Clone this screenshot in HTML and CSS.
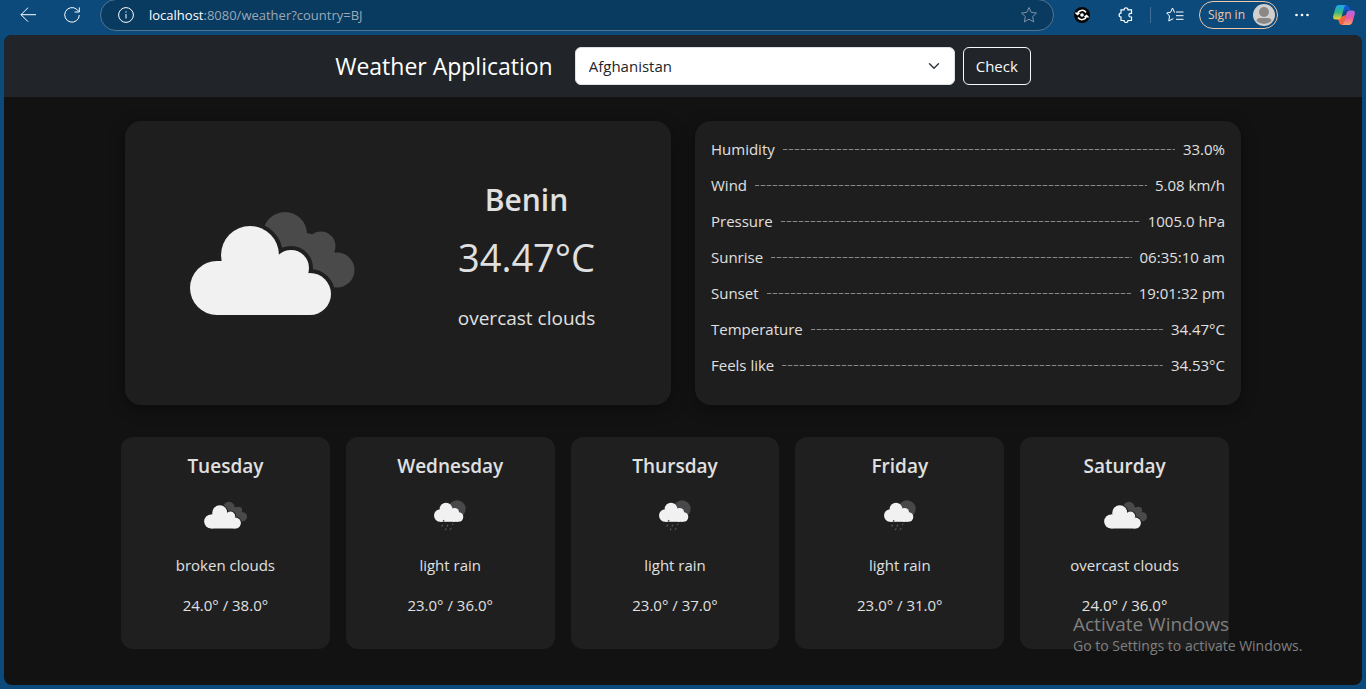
FILE: index.html
```html
<!DOCTYPE html>
<html lang="en">
<head>
<meta charset="utf-8">
<title>Weather Application</title>
<link rel="stylesheet" href="styles.css">
</head>
<body>
<svg class="defs" aria-hidden="true">
  <symbol id="clouds" viewBox="-19 -19 230 230">
    <g fill="#4a4a4b"><circle cx="111" cy="67" r="22"/><circle cx="147" cy="79" r="14.500"/><circle cx="163" cy="103" r="17.500"/><path d="M111 60L133 66 150 70 161 86 160 118 120 100Z"/></g>
    <g class="halo"><circle cx="43" cy="121" r="26"/><circle cx="76" cy="88" r="29"/><circle cx="117" cy="101" r="18"/><circle cx="136" cy="127" r="21"/></g>
    <g fill="#f1f1f1"><circle cx="43" cy="121" r="27"/><circle cx="76" cy="88" r="29"/><circle cx="117" cy="101" r="18"/><circle cx="136" cy="127" r="21"/><path d="M43 94H110L136 110V148H43Z"/></g>
  </symbol>
  <symbol id="rain" viewBox="0 0 60 60">
    <circle cx="37" cy="24" r="8.7" fill="#48484a"/>
    <g fill="#f1f1f1"><circle cx="20.3" cy="30.5" r="6.3"/><circle cx="26" cy="24" r="6.3"/><circle cx="34.5" cy="27.5" r="4.6"/><circle cx="38.5" cy="32" r="4.8"/><path d="M20 26H35V36.8H20Z"/><path d="M33 29H38V36.8H33Z"/></g>
    <path d="M24 35l-.8 1.6M22.8 39.6l-1.2 2M28 39.6l-1.2 2M33 38.6l-.8 1.4M26.2 43.4l-1 1.8M31.2 43l-1.2 2" stroke="#505052" stroke-width="1.3" fill="none"/>
  </symbol>
</svg>

<div class="toolbar">
  <button class="tool" aria-label="Back"><svg width="16" height="16" viewBox="0 0 16 16"><path d="M16 7.7H1M8 .7l-7 7 7 7"/></svg></button>
  <button class="tool refresh" aria-label="Refresh"><svg width="16" height="16" viewBox="0 0 16 16"><path d="M15.3 8A7.3 7.3 0 1 1 12.6 2.2L15 4.7M15.3.4V5H10.6"/></svg></button>
  <div class="address">
    <svg width="16" height="16" viewBox="0 0 16 16"><circle cx="8" cy="8" r="7.4"/><path d="M8 7v4.5M8 4.3v1.3"/></svg>
    <span class="url"><b>localhost</b>:8080/weather?country=BJ</span>
    <svg class="star" width="18" height="18" viewBox="0 0 18 18"><path d="M9 1.5l2.2 4.9 5.3.6-3.9 3.6 1.1 5.3L9 13.2l-4.700 2.700 1.100-5.300L1.500 7l5.300-.6z"/></svg>
  </div>
  <button class="tool" aria-label="Sync"><svg width="16" height="16" viewBox="0 0 16 16"><circle cx="8" cy="8" r="8" fill="#050505" stroke="none"/><circle cx="8" cy="8" r="1.800" fill="#fff" stroke="none"/><path stroke-width="1.500" d="M3.500 7A4.700 4.700 0 0 1 12 5.500M12.500 9A4.700 4.700 0 0 1 4 10.500M1.500 5.500l2 2 2-1.500M14.500 10.500l-2-2-2 1.500"/></svg></button>
  <button class="tool puzzle" aria-label="Extensions"><svg width="16" height="16" viewBox="0 0 16 16"><path stroke-width="1.200" d="M3 2.800H6A2 2 0 0 1 10 2.800H13.500V6.300H12.700A1.800 1.800 0 0 0 12.700 10H13.500V13.500H10A2 2 0 0 1 6 13.500H3V10A1.900 1.900 0 0 1 3 6.200Z"/></svg></button>
  <span class="divider"></span>
  <button class="tool" aria-label="Favorites"><svg width="18" height="16" viewBox="0 0 18 16"><path d="M9 5.300H8.500L6.500 1 4.600 5.300.7 5.900l2.800 3.100-.7 5 4.500-2.400M10 5h7.500M10 8.700h7.500M10 12.300h7.500"/></svg></button>
  <button class="signin">Sign in<svg width="22" height="22" viewBox="0 0 22 22"><circle cx="11" cy="11" r="11" fill="#d2d0ce"/><circle cx="11" cy="8" r="5" fill="#8a8886"/><path d="M3.500 17Q4 14 7 14h8q3 0 3.500 3A11 11 0 0 1 3.500 17" fill="#8a8886"/></svg></button>
  <button class="tool" aria-label="More"><svg width="16" height="16" viewBox="0 0 16 16"><g fill="#fff" stroke="none"><circle cx="2.500" cy="8" r="1.300"/><circle cx="8" cy="8" r="1.300"/><circle cx="13.500" cy="8" r="1.300"/></g></svg></button>
  <button class="tool copilot" aria-label="Copilot"><svg width="22" height="20" viewBox="0 0 22 20">
    <defs>
      <linearGradient id="ca" x1="0" y1="0" x2="0" y2="1"><stop offset="0" stop-color="#1ba5ef"/><stop offset=".5" stop-color="#35b884"/><stop offset="1" stop-color="#f2d22e"/></linearGradient>
      <linearGradient id="cb" x1="0" y1="0" x2="0" y2="1"><stop offset="0" stop-color="#a66bf0"/><stop offset=".5" stop-color="#e958a4"/><stop offset="1" stop-color="#ffa15c"/></linearGradient>
    </defs>
    <g stroke="none"><path fill="#1557cf" d="M11 0h2.500q2 0 2.700 2l1 3h-4L10 9z"/><path fill="#f4643c" d="M5 14l5-3 3-1-2 8q-.6 2-2 2-2 0-2.700-2z"/><path fill="url(#ca)" d="M5.500 0H13q-1.300.6-2 3L8.600 11.500Q7.700 14.500 5 14.500H2.500Q-.5 14.500.2 11L2.500 3Q3.300 0 5.500 0Z"/><path fill="url(#cb)" d="M16.500 5.500h3q3 0 2.300 3.500l-2.300 8q-.8 3-3 3H9q1.300-.6 2-3l2.400-8.500q.8-3 3.100-3Z"/></g></svg></button>
</div>

<div class="page">
  <header class="navbar">
    <h1 class="brand">Weather Application</h1>
    <form class="search">
      <select class="country" aria-label="Country"><option>Afghanistan</option></select>
      <button class="check" type="button">Check</button>
    </form>
  </header>
  <main>
    <section class="current">
      <article class="card summary">
        <div class="picture"><svg class="big"><use href="#clouds"/></svg></div>
        <div class="reading">
          <h2>Benin</h2>
          <p class="degrees">34.47°C</p>
          <p class="sky">overcast clouds</p>
        </div>
      </article>
      <dl class="card details">
        <div><dt>Humidity</dt><dd>33.0%</dd></div>
        <div><dt>Wind</dt><dd>5.08 km/h</dd></div>
        <div><dt>Pressure</dt><dd>1005.0 hPa</dd></div>
        <div><dt>Sunrise</dt><dd>06:35:10 am</dd></div>
        <div><dt>Sunset</dt><dd>19:01:32 pm</dd></div>
        <div><dt>Temperature</dt><dd>34.47°C</dd></div>
        <div><dt>Feels like</dt><dd>34.53°C</dd></div>
      </dl>
    </section>
    <section class="forecast">
      <article class="day"><h3>Tuesday</h3><svg><use href="#clouds"/></svg><p>broken clouds</p><p>24.0° / 38.0°</p></article>
      <article class="day"><h3>Wednesday</h3><svg><use href="#rain"/></svg><p>light rain</p><p>23.0° / 36.0°</p></article>
      <article class="day"><h3>Thursday</h3><svg><use href="#rain"/></svg><p>light rain</p><p>23.0° / 37.0°</p></article>
      <article class="day"><h3>Friday</h3><svg><use href="#rain"/></svg><p>light rain</p><p>23.0° / 31.0°</p></article>
      <article class="day"><h3>Saturday</h3><svg><use href="#clouds"/></svg><p>overcast clouds</p><p>24.0° / 36.0°</p></article>
    </section>
  </main>
</div>

<aside class="activate">
  <p class="activate-title">Activate Windows</p>
  <p>Go to Settings to activate Windows.</p>
</aside>
</body>
</html>
```
FILE: styles.css
```css
* { box-sizing: border-box; }

body {
  margin: 0;
  min-height: 100vh;
  display: flex;
  flex-direction: column;
  background: #0c4a7b;
  color: #e0e0e0;
  font: 15px/24px "Open Sans", "Noto Sans", sans-serif;
}

h1, h2, h3, p, dl, dd { margin: 0; }
button, select { font: inherit; color: inherit; }
.defs { position: absolute; width: 0; height: 0; }
.halo { fill: #1f1f1f; stroke: #1f1f1f; stroke-width: 8px; }

/* Browser toolbar */
.toolbar {
  display: flex;
  align-items: center;
  height: 35px;
  padding: 0 10px 5px 16px;
  overflow: hidden;
}
.tool {
  display: flex;
  align-items: center;
  justify-content: center;
  flex: none;
  width: 24px;
  height: 24px;
  padding: 0;
  border: 0;
  background: none;
}
.tool svg, .address svg { fill: none; stroke: #fff; }
.refresh { margin: 0 16px 0 20px; }
.address {
  flex: 1;
  display: flex;
  align-items: center;
  gap: 15px;
  height: 32px;
  margin-right: 16px;
  padding: 0 15px 0 17px;
  border: 1px solid #54748f;
  border-radius: 16px;
  background: #093a60;
}
.url { flex: 1; color: #9aa9b7; font-size: 13px; line-height: 18px; }
.url b { color: #fff; font-weight: 400; }
.address .star { stroke: #7d94a8; }
.puzzle { margin-left: 20px; }
.divider { width: 1px; height: 16px; margin: 0 12px; background: #426f96; }
.signin {
  display: flex;
  align-items: center;
  gap: 8px;
  height: 28px;
  margin: 0 12px;
  padding: 0 2px 0 8px;
  border: 1px solid #f0c8a8;
  border-radius: 14px;
  background: none;
  color: #f0c8a8;
  font-size: 12px;
  white-space: nowrap;
}
.copilot { margin-left: 18px; }

/* Page */
.page {
  flex: 1;
  margin: 0 4px 4px;
  border-radius: 8px;
  overflow: hidden;
  background: #121212;
}
.navbar {
  display: flex;
  align-items: center;
  justify-content: center;
  gap: 22px;
  padding: 12px;
  background: #212529;
}
.brand { color: #fff; font-size: 23px; line-height: 38px; font-weight: 400; }
.search { display: flex; gap: 8px; }
.country {
  width: 380px;
  height: 38px;
  padding: 0 36px 0 13px;
  border: 1px solid #dee2e6;
  border-radius: 6px;
  appearance: none;
  background: #fff url("data:image/svg+xml,%3Csvg xmlns='http://www.w3.org/2000/svg' viewBox='0 0 16 16'%3E%3Cpath fill='none' stroke='%23343a40' stroke-linecap='round' stroke-linejoin='round' stroke-width='2' d='m2 5 6 6 6-6'/%3E%3C/svg%3E") no-repeat right 13px center / 14px 12px;
  color: #212529;
}
.check {
  height: 38px;
  padding: 0 12px;
  border: 1px solid #f8f9fa;
  border-radius: 6px;
  background: none;
  color: #f8f9fa;
}

main { max-width: 1140px; margin: 0 auto; padding: 24px 0; }
.current {
  display: grid;
  grid-template-columns: 1fr 1fr;
  gap: 24px;
  padding: 0 12px;
}
.card {
  padding: 16px;
  border-radius: 16px;
  background: #1e1e1e;
  box-shadow: 0 4px 16px rgba(0, 0, 0, .4);
}
.summary {
  display: grid;
  grid-template-columns: 1fr 1fr;
  align-items: center;
  text-align: center;
}
.big { display: block; width: 230px; height: 230px; margin: 0 auto; }
.reading h2 { margin-bottom: 8px; font-size: 30px; line-height: 38px; font-weight: 600; }
.degrees { margin-bottom: 16px; font-size: 38px; line-height: 60px; }
.sky { margin-bottom: 12px; font-size: 19px; line-height: 30px; }

.details div { display: flex; align-items: center; gap: 8px; margin-bottom: 12px; }
.details dt { display: contents; }
.details dt::after {
  content: "";
  flex: 1;
  height: 2px;
  background: repeating-linear-gradient(90deg, #888 0 4px, #3a3a3a 4px 6px) bottom / 100% 1px no-repeat;
}

.forecast {
  display: grid;
  grid-template-columns: repeat(5, 1fr);
  gap: 16px;
  margin-top: 32px;
  padding: 0 24px 0 8px;
}
.day {
  padding: 16px;
  border-radius: 12px;
  background: #1f1f1f;
  text-align: center;
}
.day h3 { margin-bottom: 6px; font-size: 19px; line-height: 26px; font-weight: 600; }
.day svg { display: block; width: 60px; height: 60px; margin: 0 auto 8px; }
.day p { margin-bottom: 16px; }

/* Desktop watermark, drawn over the window */
.activate {
  position: absolute;
  right: 57px;
  bottom: 33px;
  width: 236px;
  color: #808080;
  font-size: 14px;
  line-height: 20px;
  white-space: nowrap;
}
.activate-title { margin-bottom: 2px; font-size: 19px; line-height: 20px; }
```
